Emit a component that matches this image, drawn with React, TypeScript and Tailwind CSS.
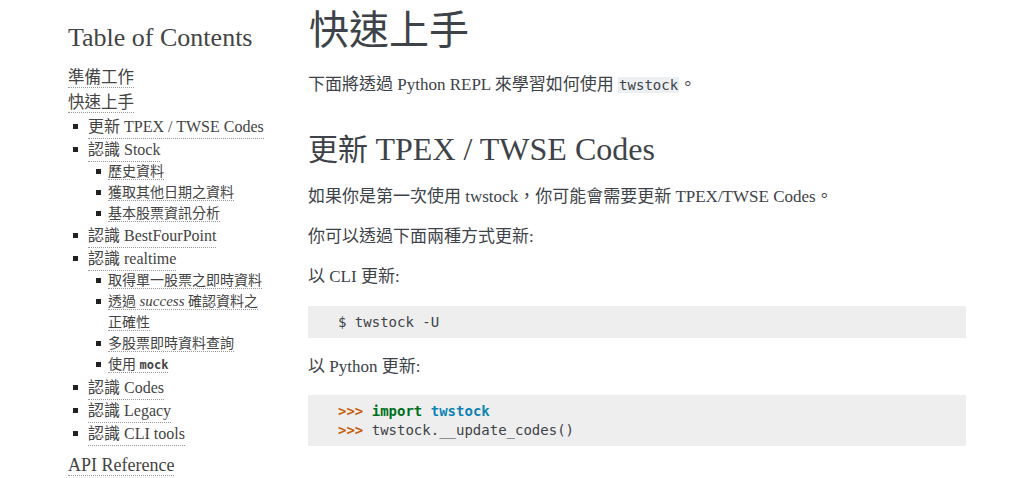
import React from 'react'

const serif = "font-['Liberation_Serif','Noto_Sans_CJK_TC',serif]"
const mono = "font-['DejaVu_Sans_Mono','Liberation_Mono',monospace]"

type Item = { label: React.ReactNode; children?: Item[] }

const toc: Item[] = [
  { label: '更新 TPEX / TWSE Codes' },
  {
    label: '認識 Stock',
    children: [{ label: '歷史資料' }, { label: '獲取其他日期之資料' }, { label: '基本股票資訊分析' }],
  },
  { label: '認識 BestFourPoint' },
  {
    label: '認識 realtime',
    children: [
      { label: '取得單一股票之即時資料' },
      {
        label: (
          <>
            透過 <em className="text-[15px]">success</em> 確認資料之
            <br />
            正確性
          </>
        ),
      },
      { label: '多股票即時資料查詢' },
      {
        label: (
          <>
            使用 <span className={`${mono} text-[12px] font-bold`}>mock</span>
          </>
        ),
      },
    ],
  },
  { label: '認識 Codes' },
  { label: '認識 Legacy' },
  { label: '認識 CLI tools' },
]

function Link({ children }: { children: React.ReactNode }) {
  return <span className="border-b border-dotted border-[#999]">{children}</span>
}

function Bullet() {
  return <span className="inline-block w-[5px] h-[5px] bg-[#222] shrink-0" />
}

function Sidebar() {
  return (
    <div className={`w-[240px] shrink-0 text-[#444] ${serif}`}>
      <h3 className="text-[26px] leading-[30px] mt-[23px] mb-[12px]">Table of Contents</h3>
      <div className="text-[16.5px] leading-[25px]">
        <div>
          <Link>準備工作</Link>
        </div>
        <div>
          <Link>快速上手</Link>
        </div>
      </div>
      <ul>
        {toc.map((it, i) => (
          <li key={i}>
            <div className="flex items-center text-[16px] leading-[23px] h-[23px]">
              <span className="w-[20px] pl-[5px] flex items-center">
                <Bullet />
              </span>
              <Link>{it.label}</Link>
            </div>
            {it.children && (
              <ul>
                {it.children.map((c, j) => (
                  <li key={j} className="flex text-[14px] leading-[21px] pl-[20px]">
                    <span className="w-[20px] pl-[8px] h-[21px] flex items-center shrink-0">
                      <Bullet />
                    </span>
                    <span className="whitespace-nowrap">
                      <Link>{c.label}</Link>
                    </span>
                  </li>
                ))}
              </ul>
            )}
          </li>
        ))}
      </ul>
      <div className="text-[18px] leading-[22px] mt-[9px]">
        <Link>API Reference</Link>
      </div>
    </div>
  )
}

export default function App() {
  return (
    <div className="w-[1024px] h-[478px] overflow-hidden bg-white flex pl-[68px]">
      <Sidebar />
      <div className={`w-[658px] text-[#3E4349] ${serif}`}>
        <h1 className="text-[40px] leading-[50px] mt-[6px] mb-[17px] pl-[1px]">快速上手</h1>
        <p className="text-[17px] leading-[24px]">
          下面將透過 Python REPL 來學習如何使用{' '}
          <code className={`${mono} text-[14px] bg-[#ecf0f3] px-[1px]`}>twstock</code>。
        </p>
        <h2 className="text-[30px] leading-[40px] mt-[32px] mb-[15px]">
          更新 <span className="text-[32px]">TPEX / TWSE Codes</span>
        </h2>
        <p className="text-[17px] leading-[24px] mb-[16px]">
          如果你是第一次使用 twstock，你可能會需要更新 TPEX/TWSE Codes。
        </p>
        <p className="text-[17px] leading-[24px] mb-[16px]">你可以透過下面兩種方式更新:</p>
        <p className="text-[17px] leading-[24px] mb-[17px]">以 CLI 更新:</p>
        <pre className={`${mono} text-[14px] leading-[20px] bg-[#eeeeee] px-[30px] py-[6px] text-[#3E4349]`}>
          $ twstock -U
        </pre>
        <p className="text-[17px] leading-[24px] mt-[17px] mb-[16px]">以 Python 更新:</p>
        <pre className={`${mono} text-[14px] leading-[19px] bg-[#eeeeee] px-[30px] pt-[7px] pb-[6px] text-[#3E4349]`}>
          <span className="text-[#c65d09] font-bold">&gt;&gt;&gt; </span>
          <span className="text-[#007020] font-bold">import</span>{' '}
          <span className="text-[#0e84b5] font-bold">twstock</span>
          {'\n'}
          <span className="text-[#c65d09] font-bold">&gt;&gt;&gt; </span>twstock.__update_codes()
        </pre>
      </div>
    </div>
  )
}
